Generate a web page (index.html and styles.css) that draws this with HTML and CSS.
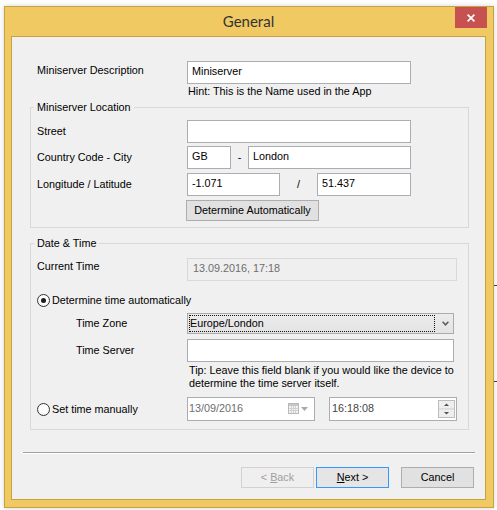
FILE: index.html
```html
<!DOCTYPE html>
<html lang="en">
<head>
<meta charset="utf-8">
<title>General</title>
<link rel="stylesheet" href="styles.css">
</head>
<body>
<div class="desk-line desk-line-a"></div>
<div class="desk-line desk-line-b"></div>
<div class="window">
  <div class="titlebar">
    <span class="title">General</span>
    <div class="close-btn"><svg width="8" height="8" viewBox="0 0 8 8"><path d="M0.6 0.6 L7.4 7.4 M7.4 0.6 L0.6 7.4" stroke="#fff" stroke-width="1.7"/></svg></div>
  </div>
  <div class="client">
    <div class="content">
      <div class="row">
        <span class="lbl lbl-desc">Miniserver Description</span>
        <div class="field w-wide">Miniserver</div>
      </div>
      <div class="hint">Hint: This is the Name used in the App</div>
      <fieldset class="group group-location">
        <legend>Miniserver Location</legend>
        <div class="row"><span class="lbl">Street</span><div class="field w-wide"></div></div>
        <div class="row row-country"><span class="lbl">Country Code - City</span><div class="field w-code">GB</div><span class="sep-char sep-dash">-</span><div class="field w-city">London</div></div>
        <div class="row row-coords"><span class="lbl">Longitude / Latitude</span><div class="field w-lon">-1.071</div><span class="sep-char sep-slash">/</span><div class="field w-lat">51.437</div></div>
        <div class="row row-determine"><button class="btn btn-determine" type="button">Determine Automatically</button></div>
      </fieldset>
      <fieldset class="group group-time">
        <legend>Date &amp; Time</legend>
        <div class="row"><span class="lbl lbl-current">Current Time</span><div class="field field-disabled w-full">13.09.2016, 17:18</div></div>
        <div class="row row-auto"><span class="radio checked"></span><span class="opt-text">Determine time automatically</span></div>
        <div class="row row-zone"><span class="lbl lbl-sub">Time Zone</span><div class="combo"><span class="combo-value">Europe/London</span><span class="combo-arrow"><svg width="7" height="5" viewBox="0 0 7 5"><path d="M0.6 0.8 L3.5 3.8 L6.4 0.8" fill="none" stroke="#5a5a5a" stroke-width="1.5"/></svg></span></div></div>
        <div class="row row-server"><span class="lbl lbl-sub">Time Server</span><div class="field w-server"></div></div>
        <div class="tip">Tip: Leave this field blank if you would like the device to<br>determine the time server itself.</div>
        <div class="row row-manual">
          <div class="radio-opt"><span class="radio"></span><span class="opt-text">Set time manually</span></div>
          <div class="field field-date">
            <span class="date-text">13/09/2016</span>
            <svg class="cal-icon" width="11" height="11" viewBox="0 0 11 11"><rect x="0.5" y="0.5" width="10" height="10" fill="#f3f3f3" stroke="#b9b9b9"/><rect x="1" y="1" width="9" height="2" fill="#c6c6c6"/><path d="M3.5 3v7M5.5 3v7M7.5 3v7M1 5.5h9M1 7.5h9" stroke="#d2d2d2" stroke-width="1"/></svg>
            <svg width="7" height="4" viewBox="0 0 7 4"><path d="M0 0h7L3.5 4z" fill="#a9a9a9"/></svg>
          </div>
          <div class="field field-clock">
            <span class="clock-text">16:18:08</span>
            <svg class="spinner" width="17" height="18" viewBox="0 0 17 18"><rect x="0.5" y="0.5" width="16" height="17" fill="#eeeeee" stroke="#bdbdbd"/><path d="M1 9h15" stroke="#cfcfcf"/><path d="M6 6 L8.5 3.5 L11 6 Z" fill="#505050"/><path d="M6 12 L8.5 14.5 L11 12 Z" fill="#505050"/></svg>
          </div>
        </div>
      </fieldset>
    </div>
    <div class="separator"></div>
    <div class="actions">
      <button class="btn btn-disabled btn-back" type="button">&lt; <u>B</u>ack</button>
      <button class="btn btn-default btn-next" type="button"><u>N</u>ext &gt;</button>
      <button class="btn" type="button">Cancel</button>
    </div>
  </div>
</div>
</body>
</html>
```
FILE: styles.css
```css
* { box-sizing: border-box; }

html, body {
  margin: 0;
  background: #ffffff;
}

body {
  position: relative;
  width: 497px;
  height: 510px;
  overflow: hidden;
  padding: 6px 0 0 4px;
  font-family: "Liberation Sans", Arial, sans-serif;
  font-size: 10.8px;
  color: #000;
}

.desk-line {
  position: absolute;
  left: 494px;
  width: 3px;
  height: 1px;
  background: #3c3c3c;
}
.desk-line-a { top: 285px; }
.desk-line-b { top: 381px; }

.window {
  width: 490px;
  height: 502px;
  border: 1px solid #c6a244;
  background: #f0c962;
  padding: 0 7px 7px 6px;
  box-shadow: 0 0 5px rgba(0, 0, 0, 0.18);
  display: flex;
  flex-direction: column;
}

.titlebar {
  position: relative;
  height: 29px;
  flex: none;
  display: flex;
  align-items: center;
  justify-content: center;
}

.title {
  font-family: Lato, "Noto Sans", sans-serif;
  font-size: 15px;
  color: #333;
  line-height: 18px;
  margin-top: -1px;
}

.close-btn {
  position: absolute;
  top: 0;
  right: -1px;
  width: 32px;
  height: 21px;
  background: #c75050;
  display: flex;
  align-items: center;
  justify-content: center;
}

.client {
  flex: 1;
  border: 1px solid #c6a244;
  background: #f0f0f0;
  display: flex;
  flex-direction: column;
}

.content {
  padding: 24px 0 0 18px;
}

.content > .row {
  padding-left: 7px;
}

.row {
  display: flex;
  align-items: center;
}

.lbl {
  width: 150px;
  flex: none;
  line-height: 13px;
  white-space: nowrap;
}

.lbl-desc {
  align-self: flex-start;
  margin-top: 3px;
}

.lbl-current {
  align-self: flex-start;
  margin-top: 2px;
}

.lbl-sub {
  padding-left: 39px;
}

.field {
  flex: none;
  height: 23px;
  border: 1px solid #abadb3;
  background: #fff;
  padding: 0 4px 2px;
  line-height: 19px;
  white-space: nowrap;
  overflow: hidden;
}

.w-wide { width: 224px; }
.w-code { width: 44px; }
.w-city { width: 163px; }
.w-lon { width: 93px; }
.w-lat { width: 94px; }
.w-full { width: 270px; }
.w-server { width: 267px; }

.sep-char {
  flex: none;
  text-align: center;
  line-height: 13px;
}
.sep-dash { width: 17px; }
.sep-slash { width: 37px; }

.hint {
  margin: 1px 0 0 158px;
  line-height: 13px;
}

.group {
  margin: 0;
  width: 439px;
  min-width: 0;
  border: 1px solid #d9d9d9;
  padding: 6px 0 6px 6px;
}

.group legend {
  padding: 0 3px;
  margin-left: -3px;
  line-height: 13px;
}

.group-location { margin-top: 3px; }
.group-time {
  margin-top: 9px;
  padding-top: 8px;
  padding-bottom: 8px;
}

.row-country { margin-top: 3px; }
.row-coords { margin-top: 4px; }
.row-determine { margin-top: 4px; }

.btn {
  font: inherit;
  color: #000;
  width: 73px;
  height: 21px;
  padding: 0;
  border: 1px solid #adadad;
  background: #e1e1e1;
  line-height: 17px;
}

.btn u {
  text-decoration: underline;
  text-underline-offset: 1px;
}

.btn-determine {
  width: 133px;
  margin-left: 149px;
}

.field-disabled {
  background: #efefef;
  border-color: #d9d9d9;
  color: #6d6d6d;
  padding-left: 5px;
}

.row-auto { margin-top: 13px; }
.row-zone { margin-top: 6px; }
.row-server { margin-top: 5px; }
.row-manual { margin-top: 7px; }

.radio {
  flex: none;
  width: 13px;
  height: 13px;
  border-radius: 50%;
  border: 1px solid #333;
  background: radial-gradient(circle at 50% 40%, #ffffff 40%, #ececec 100%);
  display: flex;
  align-items: center;
  justify-content: center;
  margin-right: 2px;
}

.radio.checked::after {
  content: "";
  width: 5px;
  height: 5px;
  border-radius: 50%;
  background: #1c1c1c;
}

.opt-text {
  line-height: 13px;
  white-space: nowrap;
}

.radio-opt {
  width: 150px;
  flex: none;
  display: flex;
  align-items: center;
}

.combo {
  flex: none;
  width: 267px;
  height: 21px;
  border: 1px solid #acacac;
  background: linear-gradient(#ececec, #e3e3e3);
  display: flex;
}

.combo-value {
  flex: 1;
  margin: 1px 0 1px 1px;
  border: 1px dotted #111;
  line-height: 15px;
  white-space: nowrap;
}

.combo-arrow {
  flex: none;
  width: 18px;
  display: flex;
  align-items: center;
  padding-left: 7px;
}

.tip {
  margin: 2px 0 0 152px;
  line-height: 13px;
  white-space: nowrap;
}

.field-date {
  width: 128px;
  height: 24px;
  display: flex;
  align-items: center;
  padding: 0 6px 1px 1px;
  color: #6d6d6d;
  line-height: 13px;
}

.date-text { flex: 1; }
.cal-icon { margin-right: 2px; }

.field-clock {
  width: 128px;
  height: 24px;
  margin-left: 14px;
  display: flex;
  align-items: center;
  padding: 0 1px 0 2px;
  color: #444;
  line-height: 13px;
}

.clock-text {
  flex: 1;
  padding-bottom: 1px;
}

.separator {
  margin: 22px 10px 0 11px;
  height: 2px;
  border-top: 1px solid #a0a0a0;
  border-bottom: 1px solid #ffffff;
}

.actions {
  display: flex;
  justify-content: flex-end;
  margin: 13px 11px 0 0;
}

.btn-back { margin-right: 2px; }
.btn-next { margin-right: 12px; }

.btn-disabled {
  background: #efefef;
  border-color: #d2d2d2;
  color: #a0a0a0;
}

.btn-default {
  border-color: #3399ff;
  background: #e5e5e5;
}
```
